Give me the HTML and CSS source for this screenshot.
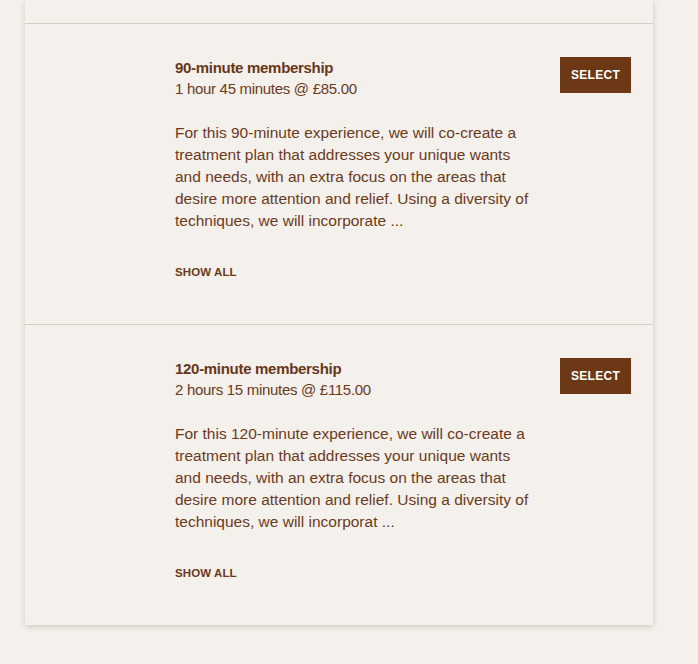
FILE: index.html
```html
<!DOCTYPE html>
<html>
<head>
<meta charset="utf-8">
<link rel="stylesheet" href="styles.css">
</head>
<body>
<div class="card">
  <div class="card-top"></div>
  <div class="item">
    <div class="info">
      <div class="title">90-minute membership</div>
      <div class="meta">1 hour 45 minutes @ £85.00</div>
      <p class="desc">For this 90-minute experience, we will co-create a treatment plan that addresses your unique wants and needs, with an extra focus on the areas that desire more attention and relief. Using a diversity of techniques, we will incorporate ...</p>
      <div class="show">SHOW ALL</div>
    </div>
    <button class="select">SELECT</button>
  </div>
  <div class="item">
    <div class="info">
      <div class="title">120-minute membership</div>
      <div class="meta">2 hours 15 minutes @ £115.00</div>
      <p class="desc">For this 120-minute experience, we will co-create a treatment plan that addresses your unique wants and needs, with an extra focus on the areas that desire more attention and relief. Using a diversity of techniques, we will incorporat ...</p>
      <div class="show">SHOW ALL</div>
    </div>
    <button class="select">SELECT</button>
  </div>
</div>
<div class="after"></div>
</body>
</html>
```
FILE: styles.css
```css
html, body {
  margin: 0;
  padding: 0;
  background: #f4f1ec;
  font-family: "Liberation Sans", Arial, sans-serif;
  color: #6b3a1c;
}
.card {
  margin-left: 25px;
  width: 628px;
  background: #f4f1ec;
  box-shadow: 0 2px 6px rgba(60, 40, 20, 0.2);
}
.after {
  height: 40px;
}
.card-top {
  height: 23px;
}
.item {
  display: flex;
  justify-content: space-between;
  align-items: flex-start;
  border-top: 1px solid #dbcdc5;
  padding: 33px 22px 44px 150px;
}
.info {
  width: 360px;
}
.title {
  font-size: 15px;
  font-weight: bold;
  line-height: 22px;
  letter-spacing: -0.3px;
  color: #653619;
}
.meta {
  font-size: 15px;
  line-height: 20px;
  letter-spacing: -0.3px;
}
.desc {
  margin: 23px 0 0;
  font-size: 15.5px;
  line-height: 22px;
  letter-spacing: 0;
  width: 357px;
}
.show {
  margin-top: 32px;
  font-size: 11.5px;
  line-height: 16px;
  font-weight: bold;
  letter-spacing: 0.1px;
}
.select {
  width: 71px;
  height: 36px;
  border: none;
  background: #6d3815;
  color: #fff;
  font-family: "Liberation Sans", Arial, sans-serif;
  font-size: 12px;
  font-weight: bold;
  letter-spacing: 0.3px;
  padding: 0;
}
```
